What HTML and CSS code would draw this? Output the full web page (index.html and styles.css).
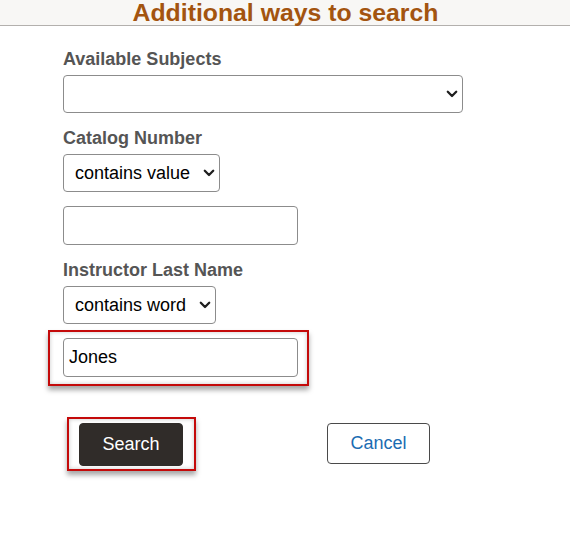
FILE: index.html
```html
<!DOCTYPE html>
<html lang="en">
<head>
<meta charset="utf-8">
<title>Additional ways to search</title>
<link rel="stylesheet" href="styles.css">
</head>
<body>
<header class="page-header">
  <h1 class="page-title">Additional ways to search</h1>
</header>
<main class="form">
  <label class="field-label first" for="subj">Available Subjects</label>
  <span class="select-wrap">
    <select id="subj" class="select select-wide"><option></option></select>
    <svg class="chev" viewBox="0 0 12 8" width="12" height="8"><polyline points="1.8,1.8 6,6 10.2,1.8"/></svg>
  </span>

  <label class="field-label" for="catop">Catalog Number</label>
  <span class="select-wrap">
    <select id="catop" class="select"><option>contains value</option></select>
    <svg class="chev" viewBox="0 0 12 8" width="12" height="8"><polyline points="1.8,1.8 6,6 10.2,1.8"/></svg>
  </span>
  <input class="text-input" type="text" aria-label="Catalog Number">

  <label class="field-label" for="instop">Instructor Last Name</label>
  <span class="select-wrap">
    <select id="instop" class="select"><option>contains word</option></select>
    <svg class="chev" viewBox="0 0 12 8" width="12" height="8"><polyline points="1.8,1.8 6,6 10.2,1.8"/></svg>
  </span>
  <div class="highlight highlight-input">
    <input class="text-input flush" type="text" value="Jones" aria-label="Instructor Last Name">
  </div>

  <div class="actions">
    <div class="highlight highlight-btn">
      <button class="btn btn-primary" type="button">Search</button>
    </div>
    <button class="btn btn-secondary" type="button">Cancel</button>
  </div>
</main>
</body>
</html>
```

FILE: styles.css
```css
html, body {
  margin: 0;
  padding: 0;
  background: #ffffff;
  font-family: "Liberation Sans", Arial, sans-serif;
}

.page-header {
  height: 25px;
  background: #f8f7f5;
  border-bottom: 1px solid #b3b0ad;
  display: flex;
  justify-content: center;
}

.page-title {
  margin: 0;
  font-size: 24.8px;
  line-height: 25px;
  font-weight: bold;
  color: #a3540f;
  padding-left: 1px;
}

.form {
  display: flex;
  flex-direction: column;
  align-items: flex-start;
  padding: 0 0 40px 63px;
}

.field-label {
  display: block;
  margin-top: 15px;
  margin-bottom: 6px;
  font-size: 18px;
  line-height: 20px;
  font-weight: bold;
  color: #555555;
}

.field-label.first {
  margin-top: 23px;
}

.select-wrap {
  position: relative;
  display: inline-flex;
}

.select {
  -webkit-appearance: none;
  appearance: none;
  height: 38px;
  margin: 0;
  padding: 0 28px 0 11px;
  border: 1px solid #8c8c8c;
  border-radius: 4px;
  background: #ffffff;
  color: #000000;
  font-family: "Liberation Sans", Arial, sans-serif;
  font-size: 18px;
}

.select-wide {
  width: 400px;
}

.chev {
  position: absolute;
  right: 5px;
  top: 15px;
  pointer-events: none;
  fill: none;
  stroke: #1f1f1f;
  stroke-width: 2.3;
  stroke-linecap: round;
  stroke-linejoin: round;
}

.text-input {
  box-sizing: border-box;
  width: 235px;
  height: 39px;
  margin: 14px 0 0 0;
  padding: 0 5px;
  border: 1px solid #8c8c8c;
  border-radius: 4px;
  background: #ffffff;
  color: #000000;
  font-family: "Liberation Sans", Arial, sans-serif;
  font-size: 18px;
}

.text-input.flush {
  display: block;
  margin: 0;
}

.highlight {
  border: 2px solid #c40a0a;
  box-shadow: 0 4px 5px rgba(0, 0, 0, 0.35), inset 0 0 4px rgba(0, 0, 0, 0.22);
  background: #ffffff;
}

.highlight-input {
  margin: 6px 0 -9px -15px;
  padding: 6px 9px 7px 13px;
}

.actions {
  display: flex;
  align-items: flex-start;
  gap: 144px;
  margin-top: 46px;
  padding-left: 16px;
}

.highlight-btn {
  display: block;
  margin: -6px -13px -5px -12px;
  padding: 4px 11px 3px 10px;
}

.btn {
  display: block;
  margin: 0;
  font-family: "Liberation Sans", Arial, sans-serif;
  font-size: 18px;
  border-radius: 4px;
  cursor: pointer;
}

.btn-primary {
  width: 104px;
  height: 43px;
  background: #302c29;
  border: 1px solid #302c29;
  color: #ffffff;
}

.btn-secondary {
  width: 103px;
  height: 41px;
  background: #ffffff;
  border: 1px solid #4a4a4a;
  color: #1b6cb2;
}
```
